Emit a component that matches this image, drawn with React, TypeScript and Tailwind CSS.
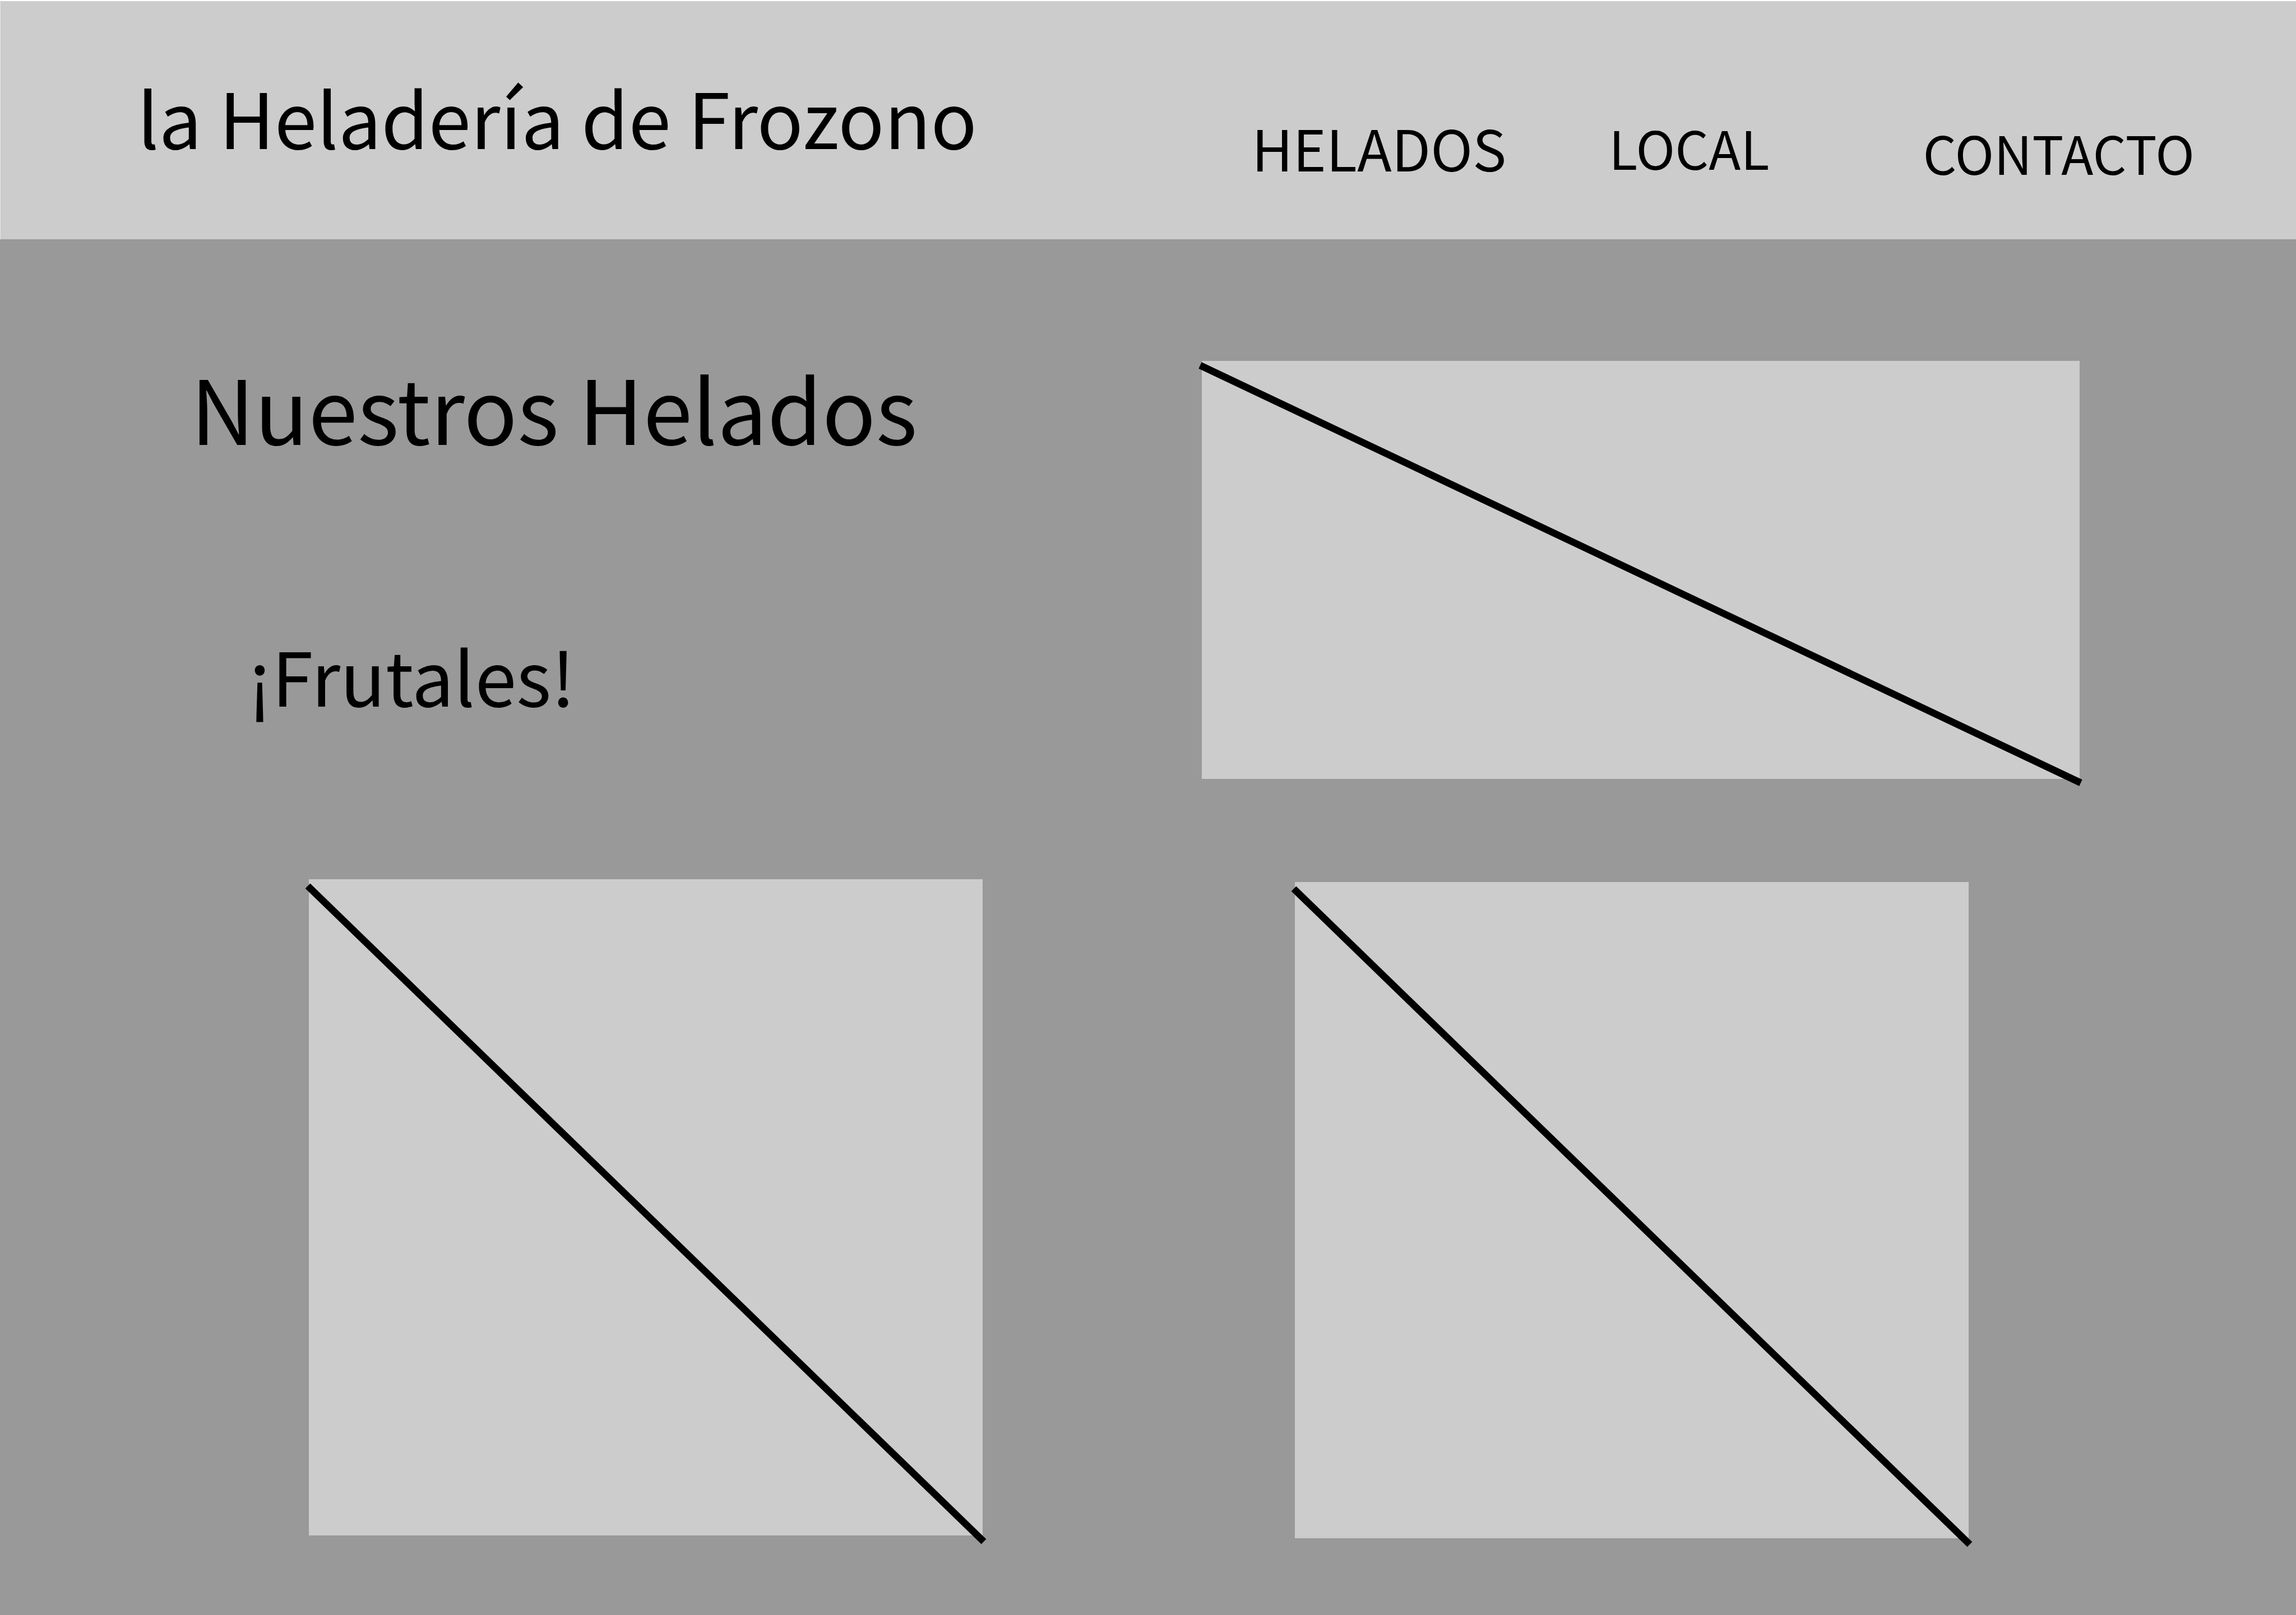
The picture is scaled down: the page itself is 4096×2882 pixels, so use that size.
type PlaceholderProps = {
  width: number;
  height: number;
  line: [number, number, number, number];
  label: string;
};

function Placeholder({ width, height, line, label }: PlaceholderProps) {
  const [x1, y1, x2, y2] = line;
  return (
    <svg
      role="img"
      aria-label={label}
      viewBox={`0 0 ${width} ${height}`}
      preserveAspectRatio="none"
      className="block h-full w-full overflow-visible"
    >
      <line x1={x1} y1={y1} x2={x2} y2={y2} stroke="#000" strokeWidth={12.5} />
    </svg>
  );
}

const flavours = [
  { name: 'Helado frutal 1', style: 'mt-0' },
  { name: 'Helado frutal 2', style: 'mt-[5px]' },
];

export default function App() {
  return (
    <div className="min-h-screen bg-[#999999] font-['Noto_Sans_CJK_SC',sans-serif] text-black">
      <header className="flex min-h-[427px] items-start border-t-2 border-l border-t-white border-l-[#e6e6e6] bg-[#cccccc] pr-[181px] pl-[244px]">
        <div className="mt-[125px] text-[136px] leading-[160px] whitespace-nowrap">
          la Heladería de Frozono
        </div>
        <nav className="mt-[200px] ml-auto flex items-start whitespace-nowrap">
          <a href="#helados" className="text-[101px] leading-[120px]">
            HELADOS
          </a>
          <a href="#local" className="ml-[183px] text-[94px] leading-[120px]">
            LOCAL
          </a>
          <a href="#contacto" className="mt-[9px] ml-[274px] text-[94px] leading-[120px]">
            CONTACTO
          </a>
        </nav>
      </header>

      <main className="pt-[204px] pb-[137px]">
        <section className="flex items-start pr-[386px] pl-[340px]">
          <div className="w-[1804px] shrink-0">
            <h1 className="text-[158px] leading-[190px]">Nuestros Helados</h1>
            <h2 className="mt-[302px] ml-[102px] text-[133px] leading-[160px]">¡Frutales!</h2>
          </div>
          <div className="mt-[13px] aspect-[1566/746] flex-1 bg-[#cccccc]">
            <Placeholder width={1566} height={746} line={[-3, 8, 1568, 753]} label="Nuestros Helados" />
          </div>
        </section>

        <section className="mt-[179px] flex items-start gap-[557px] pr-[584px] pl-[551px]">
          {flavours.map((f) => (
            <div key={f.name} className={`aspect-[1202/1171] flex-1 bg-[#cccccc] ${f.style}`}>
              <Placeholder width={1202} height={1171} line={[-2, 12, 1204, 1182]} label={f.name} />
            </div>
          ))}
        </section>
      </main>
    </div>
  );
}
